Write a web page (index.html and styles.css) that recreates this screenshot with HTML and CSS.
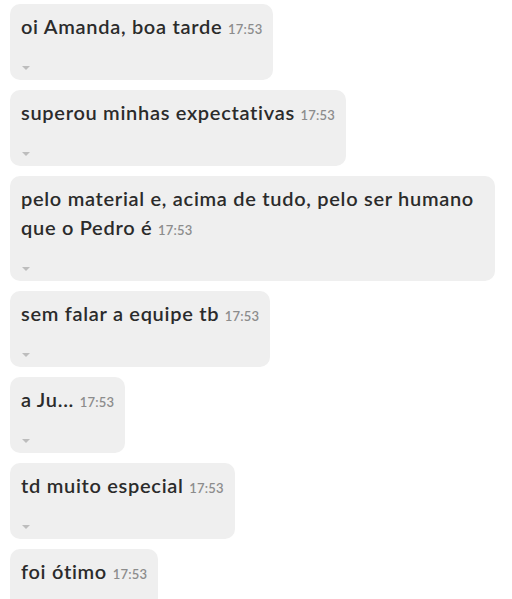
FILE: index.html
```html
<!DOCTYPE html>
<html lang="pt">
<head>
<meta charset="utf-8">
<title>Chat</title>
<link rel="stylesheet" href="styles.css">
</head>
<body>
<div class="chat">
  <div class="bubble">
    <div class="msg">oi Amanda, boa tarde <span class="time">17:53</span></div>
    <div class="foot"><span class="caret"></span></div>
  </div>
  <div class="bubble">
    <div class="msg">superou minhas expectativas <span class="time">17:53</span></div>
    <div class="foot"><span class="caret"></span></div>
  </div>
  <div class="bubble bubble-wide">
    <div class="msg">pelo material e, acima de tudo, pelo ser humano<br>que o Pedro é <span class="time">17:53</span></div>
    <div class="foot"><span class="caret"></span></div>
  </div>
  <div class="bubble">
    <div class="msg">sem falar a equipe tb <span class="time">17:53</span></div>
    <div class="foot"><span class="caret"></span></div>
  </div>
  <div class="bubble">
    <div class="msg">a Ju... <span class="time">17:53</span></div>
    <div class="foot"><span class="caret"></span></div>
  </div>
  <div class="bubble">
    <div class="msg">td muito especial <span class="time">17:53</span></div>
    <div class="foot"><span class="caret"></span></div>
  </div>
  <div class="bubble">
    <div class="msg">foi ótimo <span class="time">17:53</span></div>
    <div class="foot"><span class="caret"></span></div>
  </div>
</div>
</body>
</html>
```
FILE: styles.css
```css
html, body {
  margin: 0;
  padding: 0;
  background: #ffffff;
  overflow: hidden;
}
body {
  font-family: "Lato", "Open Sans", sans-serif;
}
.chat {
  display: flex;
  flex-direction: column;
  align-items: flex-start;
  gap: 10px;
  padding: 4px 10px;
}
.bubble {
  background: #efefef;
  border-radius: 10px;
  padding: 8px 11px 10px 11px;
  box-sizing: border-box;
}
.bubble-wide {
  width: 485px;
}
.msg {
  font-size: 20px;
  line-height: 29px;
  font-weight: 600;
  letter-spacing: 0.7px;
  color: #2b2b2b;
  white-space: nowrap;
}
.time {
  font-size: 13px;
  line-height: 1;
  font-weight: 600;
  letter-spacing: 0.2px;
  color: #8c8c8c;
}
.foot {
  height: 29px;
  display: flex;
  align-items: flex-end;
  padding-left: 1px;
}
.caret {
  width: 0;
  height: 0;
  border-left: 4px solid transparent;
  border-right: 4px solid transparent;
  border-top: 4px solid #bdbdbd;
}
```
